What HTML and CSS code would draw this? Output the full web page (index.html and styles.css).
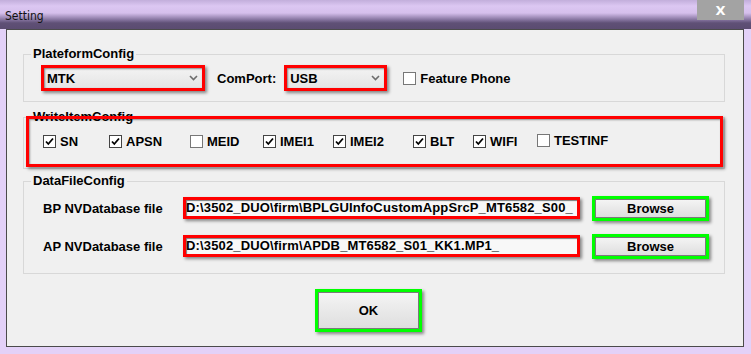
FILE: index.html
```html
<!DOCTYPE html>
<html lang="en">
<head>
<meta charset="UTF-8">
<title>Setting</title>
<link rel="stylesheet" href="styles.css">
</head>
<body>
    <div class="window">
        <div class="titlebar">
            <span class="title">Setting</span>
            <span class="close">X</span>
        </div>
        <div class="client">
            <div class="group group-platform">
                <span class="legend">PlateformConfig</span>
                <div class="hl-red combo-wrap combo-mtk">
                    <div class="combo">
                        <span>MTK</span>
                        <svg class="chevron" width="9" height="6" viewBox="0 0 9 6"><path d="M1 1 L4.5 4.5 L8 1" fill="none" stroke="#6d6d6d" stroke-width="1.6"/></svg>
                    </div>
                </div>
                <span class="field-label">ComPort:</span>
                <div class="hl-red combo-wrap combo-usb">
                    <div class="combo">
                        <span>USB</span>
                        <svg class="chevron" width="9" height="6" viewBox="0 0 9 6"><path d="M1 1 L4.5 4.5 L8 1" fill="none" stroke="#6d6d6d" stroke-width="1.6"/></svg>
                    </div>
                </div>
                <label class="check feature"><span class="box"></span>Feature Phone</label>
            </div>

            <div class="group group-items">
                <span class="legend">WriteItemConfig</span>
                <div class="items">
                    <label class="check"><span class="box checked"><svg width="11" height="11" viewBox="0 0 11 11"><path d="M2 5.5 L4.3 8 L9 2.5" fill="none" stroke="#000" stroke-width="1.8"/></svg></span>SN</label>
                    <label class="check"><span class="box checked"><svg width="11" height="11" viewBox="0 0 11 11"><path d="M2 5.5 L4.3 8 L9 2.5" fill="none" stroke="#000" stroke-width="1.8"/></svg></span>APSN</label>
                    <label class="check"><span class="box"></span>MEID</label>
                    <label class="check"><span class="box checked"><svg width="11" height="11" viewBox="0 0 11 11"><path d="M2 5.5 L4.3 8 L9 2.5" fill="none" stroke="#000" stroke-width="1.8"/></svg></span>IMEI1</label>
                    <label class="check"><span class="box checked"><svg width="11" height="11" viewBox="0 0 11 11"><path d="M2 5.5 L4.3 8 L9 2.5" fill="none" stroke="#000" stroke-width="1.8"/></svg></span>IMEI2</label>
                    <label class="check"><span class="box checked"><svg width="11" height="11" viewBox="0 0 11 11"><path d="M2 5.5 L4.3 8 L9 2.5" fill="none" stroke="#000" stroke-width="1.8"/></svg></span>BLT</label>
                    <label class="check"><span class="box checked"><svg width="11" height="11" viewBox="0 0 11 11"><path d="M2 5.5 L4.3 8 L9 2.5" fill="none" stroke="#000" stroke-width="1.8"/></svg></span>WIFI</label>
                    <label class="check raised"><span class="box"></span>TESTINF</label>
                </div>
                <div class="frame-red"></div>
            </div>

            <div class="group group-data">
                <span class="legend">DataFileConfig</span>
                <div class="file-row">
                    <span class="file-label">BP NVDatabase file</span>
                    <div class="hl-red path">D:\3502_DUO\firm\BPLGUInfoCustomAppSrcP_MT6582_S00_</div>
                    <div class="hl-green browse-wrap"><div class="btn">Browse</div></div>
                </div>
                <div class="file-row">
                    <span class="file-label">AP NVDatabase file</span>
                    <div class="hl-red path">D:\3502_DUO\firm\APDB_MT6582_S01_KK1.MP1_</div>
                    <div class="hl-green browse-wrap"><div class="btn">Browse</div></div>
                </div>
            </div>

            <div class="actions">
                <div class="hl-green ok-wrap"><div class="btn">OK</div></div>
            </div>
        </div>
    </div>
</body>
</html>
```

FILE: styles.css
```css
body {
    margin: 0;
    font-family: "Liberation Sans", Arial, sans-serif;
    font-size: 13px;
    font-weight: bold;
    color: #000;
    background-color: #e2d0f8;
}
.window {
    width: 751px;
    height: 354px;
    overflow: hidden;
    background: linear-gradient(#c2aedb 0, #dcc7f2 6px, #d5bfec 13px, #8e7ca8 19px, #5f5076 23px, #5b4c71 29px, #e3d1f8 29px, #e3d1f8 100%);
}
.titlebar {
    height: 29px;
    display: flex;
    justify-content: space-between;
    align-items: flex-start;
}
.title {
    margin: 9px 0 0 5px;
    font-family: "Liberation Sans Narrow", "DejaVu Sans Condensed", sans-serif;
    font-size: 12px;
    font-weight: normal;
    color: #111;
}
.close {
    width: 47px;
    height: 20px;
    margin-right: 7px;
    display: flex;
    align-items: center;
    justify-content: center;
    background-color: #a3a3a3;
    color: #fff;
    font-family: "DejaVu Sans", sans-serif;
    font-size: 13px;
}
.client {
    height: 318px;
    margin: 0 7px 0 6px;
    padding-top: 24px;
    box-sizing: border-box;
    border: 1px solid #4b4b4b;
    background-color: #f0f0f0;
}
.group {
    position: relative;
    margin: 0 18px 0 16px;
    border: 1px solid #d8d8d8;
}
.legend {
    position: absolute;
    top: -8px;
    left: 7px;
    padding: 0 2px;
    line-height: 14px;
    background-color: #f0f0f0;
}

/* highlight boxes */
.hl-red {
    border: 3px solid #ff0000;
    box-shadow: 2px 2px 3px rgba(0, 0, 0, 0.45);
}
.hl-green {
    border: 3px solid #00ff00;
    box-shadow: 2px 2px 3px rgba(0, 0, 0, 0.45);
}

/* platform */
.group-platform {
    display: flex;
    align-items: center;
    padding: 10px 0 10px 17px;
}
.combo-wrap {
    height: 26px;
    box-sizing: border-box;
}
.combo-mtk {
    width: 164px;
}
.combo-usb {
    width: 103px;
    margin-left: 8px;
}
.combo {
    height: 100%;
    display: flex;
    align-items: center;
    justify-content: space-between;
    padding: 0 4px 0 3px;
    box-sizing: border-box;
    background: linear-gradient(#f3f3f3, #e4e4e4);
    box-shadow: inset 1px 1px 2px rgba(0, 0, 0, 0.45);
}
.field-label {
    margin-left: 12px;
}
.feature {
    margin-left: 16px;
}

/* checkboxes */
.check {
    display: flex;
    align-items: center;
    line-height: 15px;
}
.box {
    width: 13px;
    height: 13px;
    margin-right: 4px;
    box-sizing: border-box;
    display: flex;
    align-items: center;
    justify-content: center;
    border: 1px solid #777;
    background-color: #fff;
}
.box.checked {
    border-color: #444;
}
.group-items {
    height: 52px;
    box-sizing: border-box;
    margin-top: 15px;
    padding: 16px 0 0 19px;
}
.items {
    display: grid;
    grid-template-columns: 66px 81px 73px 70px 80px 60px 64px auto;
}
.raised {
    margin-top: -2px;
}
.frame-red {
    position: absolute;
    top: -2px;
    left: 2px;
    right: 1px;
    bottom: 1px;
    border: 3px solid #ff0000;
    box-shadow: 2px 2px 3px rgba(0, 0, 0, 0.45), inset 1px 1px 2px rgba(0, 0, 0, 0.4);
}

/* data files */
.group-data {
    margin-top: 12px;
    padding: 13px 0 14px 19px;
    display: flex;
    flex-direction: column;
    gap: 12px;
}
.file-row {
    height: 26px;
    display: flex;
    align-items: center;
}
.file-label {
    width: 140px;
}
.path {
    width: 397px;
    height: 22px;
    box-sizing: border-box;
    line-height: 16px;
    letter-spacing: 0.15px;
    white-space: nowrap;
    overflow: hidden;
    background-color: #f8f8f8;
    box-shadow: 2px 2px 3px rgba(0, 0, 0, 0.45), inset 1px 1px 1px rgba(0, 0, 0, 0.5);
}
.browse-wrap {
    width: 117px;
    height: 25px;
    margin-left: 12px;
    box-sizing: border-box;
}
.btn {
    height: 100%;
    box-sizing: border-box;
    display: flex;
    align-items: center;
    justify-content: center;
    border: 1px solid #7a7a7a;
    background: linear-gradient(#f4f4f4, #dedede);
}

/* ok */
.actions {
    margin: 15px 0 0 308px;
}
.ok-wrap {
    width: 107px;
    height: 43px;
    box-sizing: border-box;
}
```
